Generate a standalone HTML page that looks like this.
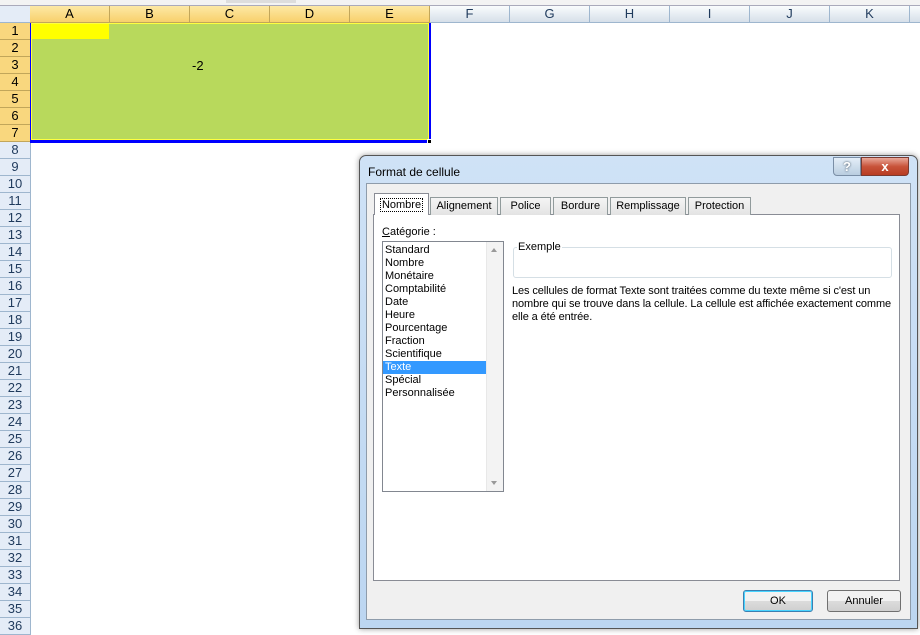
<!DOCTYPE html>
<html><head><meta charset="utf-8"><style>
*{margin:0;padding:0;box-sizing:border-box}
body{width:920px;height:629px;overflow:hidden;background:#fff;font-family:"Liberation Sans",sans-serif;position:relative}
.a{position:absolute}
.ch{position:absolute;top:6px;height:17px;border-right:1px solid #9eb6ce;border-bottom:1px solid #9eb6ce;background:linear-gradient(#f9fcfd,#d6dfe9);font-size:13px;text-align:center;line-height:16px;color:#1f3a5c}
.ch.s{background:linear-gradient(#fde9a5,#f8d06c);border-right-color:#c2a65a;border-bottom-color:#c2a65a;color:#000}
.rh{position:absolute;left:0;width:31px;height:17px;border-right:1px solid #9eb6ce;border-bottom:1px solid #9eb6ce;background:#e4ecf7;font-size:13px;text-align:center;line-height:16px;color:#1f3a5c}
.rh.s{background:#f9d77e;border-bottom-color:#c2a65a;border-right-color:#c2a65a;color:#000}
.d{font-size:11px;color:#000}
.tab{position:absolute;top:197px;height:18px;border:1px solid #919b9c;border-bottom:none;background:linear-gradient(#f5f5f5,#e3e3e3);font-size:11px;text-align:center;line-height:16px}
.it{height:13px;line-height:13px;padding-left:2px}
.btn{position:absolute;top:590px;height:22px;border:1px solid #707070;border-radius:3px;background:linear-gradient(#f2f2f2 50%,#dcdcdc 50%,#cfcfcf);font-size:11px;text-align:center;line-height:20px}
</style></head><body>
<div class="a" style="left:0;top:0;width:920px;height:6px;background:#f3f3f3;border-bottom:1px solid #aab"></div>
<div class="a" style="left:226px;top:0;width:70px;height:3px;background:#ddd"></div>
<div class="a" style="left:0;top:6px;width:31px;height:17px;background:#e4ecf7;border-right:1px solid #9eb6ce;border-bottom:1px solid #9eb6ce"></div>
<div class="ch s" style="left:30px;width:80px">A</div>
<div class="ch s" style="left:110px;width:80px">B</div>
<div class="ch s" style="left:190px;width:80px">C</div>
<div class="ch s" style="left:270px;width:80px">D</div>
<div class="ch s" style="left:350px;width:80px">E</div>
<div class="ch" style="left:430px;width:80px">F</div>
<div class="ch" style="left:510px;width:80px">G</div>
<div class="ch" style="left:590px;width:80px">H</div>
<div class="ch" style="left:670px;width:80px">I</div>
<div class="ch" style="left:750px;width:80px">J</div>
<div class="ch" style="left:830px;width:80px">K</div>
<div class="ch" style="left:910px;width:20px"></div>
<div id="rows"></div>
<script>
var r='';for(var i=1;i<=36;i++){var y=23+(i-1)*17;r+='<div class="rh'+(i<=7?' s':'')+'" style="top:'+y+'px">'+i+'</div>';}
document.getElementById('rows').innerHTML=r;
</script>
<div class="a" style="left:30px;top:23px;width:401px;height:120px;background:#0000ff"></div>
<div class="a" style="left:31px;top:23px;width:398px;height:117px;background:#ffff40"></div>
<div class="a" style="left:32px;top:24px;width:396px;height:115px;background:#b8d95c"></div>
<div class="a" style="left:32px;top:24px;width:77px;height:15px;background:#ffff00"></div>
<div class="a" style="left:427px;top:139px;width:5px;height:5px;background:#000;border:1px solid #fff"></div>
<div class="a" style="left:192px;top:58px;font-size:13px">-2</div>

<!-- dialog -->
<div class="a" style="left:359px;top:155px;width:559px;height:474px;border:1px solid #555;border-radius:7px 7px 0 0;background:linear-gradient(#cfe2f6,#bcd6f1);box-shadow:0 0 6px rgba(0,0,0,.4)"></div>
<div class="a d" style="left:368px;top:165px;font-size:12px">Format de cellule</div>
<div class="a" style="left:833px;top:157px;width:28px;height:19px;border:1px solid #7a8ea6;border-radius:0 0 0 4px;background:linear-gradient(#e4eef8,#b9cde0);font-size:13px;font-weight:bold;color:#fff;text-align:center;line-height:17px;text-shadow:0 0 2px #345">?</div>
<div class="a" style="left:861px;top:157px;width:48px;height:19px;border:1px solid #7a3a30;border-radius:0 0 4px 0;background:linear-gradient(#e9a899,#c8533a 50%,#b83c22);font-size:13px;font-weight:bold;color:#fff;text-align:center;line-height:17px">x</div>
<div class="a" style="left:366px;top:183px;width:545px;height:437px;background:#f0f0f0;border:1px solid #8e9cab"></div>
<div class="a" style="left:373px;top:214px;width:527px;height:367px;background:#fff;border:1px solid #898c95"></div>
<div class="tab" style="left:374px;top:193px;width:55px;height:22px;background:#fff;border-color:#898c95;line-height:22px"><span style="outline:1px dotted #000;padding:0 1px">Nombre</span></div>
<div class="tab" style="left:430px;width:68px">Alignement</div>
<div class="tab" style="left:500px;width:51px">Police</div>
<div class="tab" style="left:553px;width:55px">Bordure</div>
<div class="tab" style="left:610px;width:76px">Remplissage</div>
<div class="tab" style="left:688px;width:63px">Protection</div>
<div class="a d" style="left:382px;top:226px"><u>C</u>atégorie :</div>
<div class="a d" style="left:382px;top:241px;width:122px;height:251px;border:1px solid #828790;background:#fff;padding-top:2px">
<div style="width:103px">
<div class="it">Standard</div><div class="it">Nombre</div><div class="it">Monétaire</div><div class="it">Comptabilité</div><div class="it">Date</div><div class="it">Heure</div><div class="it">Pourcentage</div><div class="it">Fraction</div><div class="it">Scientifique</div><div class="it" style="background:#3399ff;color:#fff">Texte</div><div class="it">Spécial</div><div class="it">Personnalisée</div>
</div>
<div class="a" style="left:103px;top:0;width:17px;height:249px;background:#f3f3f3;border-left:1px solid #e8e8e8"></div>
<div class="a" style="left:108px;top:6px;width:0;height:0;border:3px solid transparent;border-bottom:4px solid #999;border-top:none"></div>
<div class="a" style="left:108px;top:239px;width:0;height:0;border:3px solid transparent;border-top:4px solid #999;border-bottom:none"></div>
</div>
<div class="a" style="left:513px;top:247px;width:379px;height:31px;border:1px solid #d5dfe5;border-radius:3px"></div>
<div class="a d" style="left:517px;top:241px;background:#fff;padding:0 1px">Exemple</div>
<div class="a d" style="left:512px;top:285px;width:392px;line-height:13px;letter-spacing:-0.1px">Les cellules de format Texte sont traitées comme du texte même si c'est un nombre qui se trouve dans la cellule. La cellule est affichée exactement comme elle a été entrée.</div>
<div class="btn" style="left:743px;width:70px;border-color:#3c7fb1;box-shadow:inset 0 0 0 1px #48d4ff">OK</div>
<div class="btn" style="left:827px;width:74px">Annuler</div>
</body></html>
